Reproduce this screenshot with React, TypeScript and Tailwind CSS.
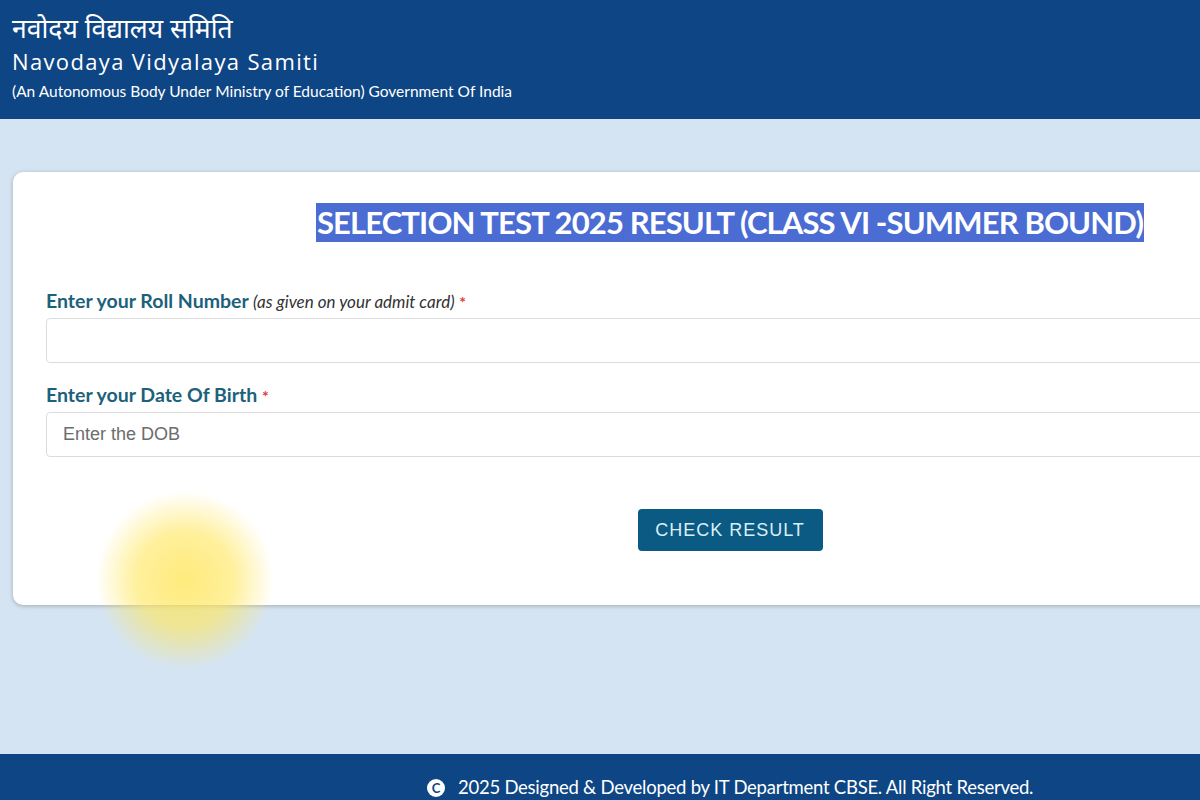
import React from "react";

export default function App() {
  return (
    <div className="relative w-[1200px] h-[800px] overflow-hidden bg-[#d5e4f2] flex flex-col" style={{ fontFamily: "Lato, 'Open Sans', sans-serif" }}>
      <header className="h-[119px] shrink-0 bg-[#0e4584] text-white pl-[12px] pt-[11px]">
        <div className="text-[26.5px] leading-[35px] font-['Noto_Sans','Noto_Sans_Devanagari',sans-serif]">नवोदय विद्यालय समिति</div>
        <div className="text-[22px] leading-[30px] tracking-[1.35px] font-['Open_Sans',sans-serif] mt-[0px]">Navodaya Vidyalaya Samiti</div>
        <div className="text-[15.5px] leading-[20px] mt-[5px]">(An Autonomous Body Under Ministry of Education) Government Of India</div>
      </header>
      <main className="flex-1 pt-[53px]">
        <div className="ml-[13px] w-[1434px] h-[433px] bg-white rounded-[10px] shadow-[0_1px_4px_rgba(0,0,0,0.25)] px-[33px] pt-[31px]">
          <div className="flex justify-center">
            <h1 className="text-[31px] leading-[39px] font-bold text-white bg-[#4a6cd3] tracking-[-0.87px] px-[1px]">SELECTION TEST 2025 RESULT (CLASS VI -SUMMER BOUND)</h1>
          </div>
          <div className="mt-[46px]">
            <label className="block text-[19.5px] leading-[26px] font-bold text-[#1c617c]">
              Enter your Roll Number <span className="italic font-normal text-[17px] text-[#333]">(as given on your admit card)</span> <span className="text-[#e03b3b] text-[16px]">*</span>
            </label>
            <div className="mt-[3px] h-[45px] border border-[#dcdcdc] rounded-[4px] bg-white"></div>
          </div>
          <div className="mt-[19px]">
            <label className="block text-[19.5px] leading-[26px] font-bold text-[#1c617c]">
              Enter your Date Of Birth <span className="text-[#e03b3b] text-[16px]">*</span>
            </label>
            <div className="mt-[3px] h-[45px] border border-[#dcdcdc] rounded-[4px] bg-white flex items-center pl-[16px] text-[18px] text-[#6c6c6c] font-['Liberation_Sans',Arial,sans-serif]">Enter the DOB</div>
          </div>
          <div className="flex justify-center mt-[52px]">
            <button className="w-[185px] h-[42px] rounded-[4px] bg-[#0b5a83] text-[#dbeef8] text-[18px] tracking-[1px] font-['Liberation_Sans',Arial,sans-serif]">CHECK RESULT</button>
          </div>
        </div>
      </main>
      <footer className="h-[46px] shrink-0 bg-[#0e4584] text-white flex items-center pl-[427px] pt-[22px] gap-[13px]">
        <span className="w-[18px] h-[18px] rounded-full bg-white text-[#0e4584] text-[13px] font-bold flex items-center justify-center leading-none">C</span>
        <span className="text-[18.5px] tracking-[-0.25px]">2025 Designed &amp; Developed by IT Department CBSE. All Right Reserved.</span>
      </footer>
      <div className="pointer-events-none absolute left-[95px] top-[490px] w-[180px] h-[180px] rounded-full bg-[radial-gradient(circle,rgba(255,228,80,0.75)_0%,rgba(255,230,90,0.6)_38%,rgba(255,240,120,0)_70%)]"></div>
    </div>
  );
}
